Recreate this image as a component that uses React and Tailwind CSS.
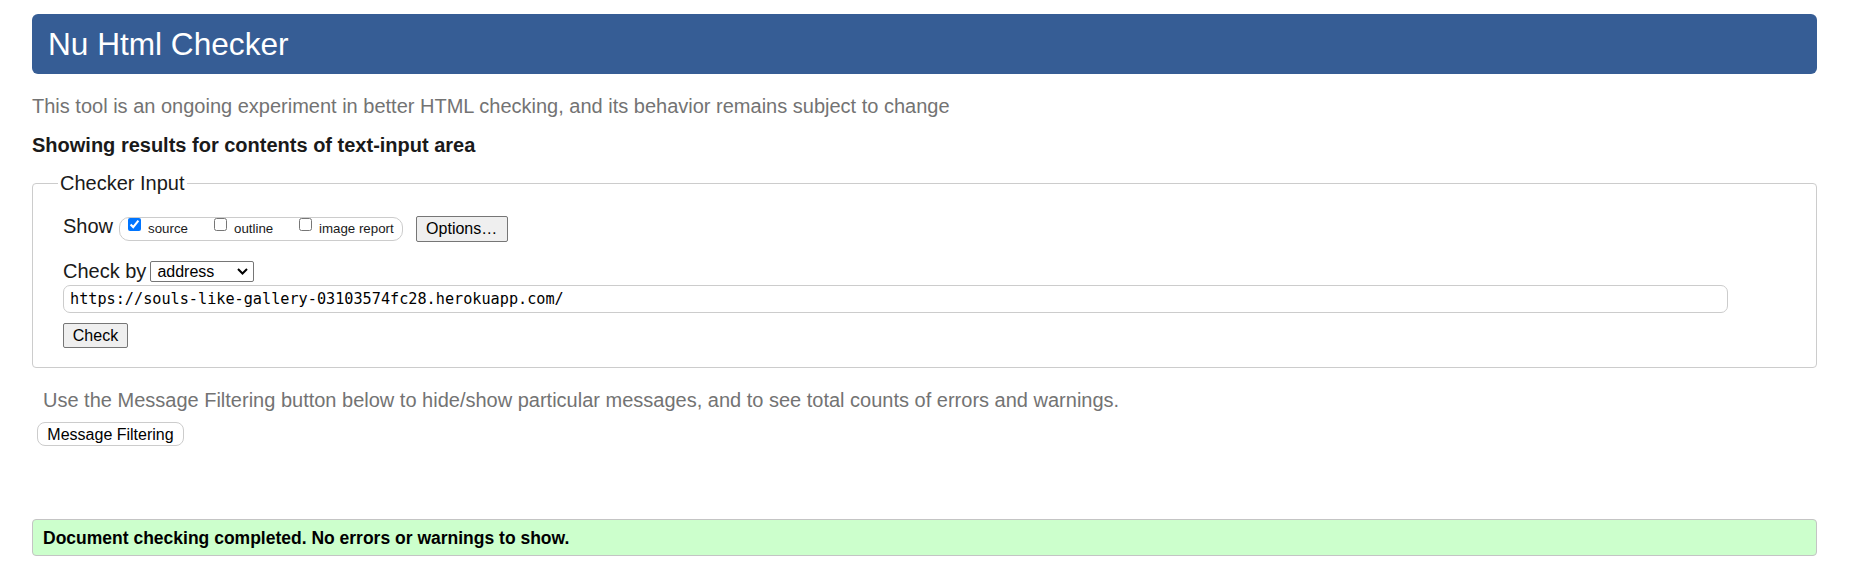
import React from 'react';

export default function App() {
  return (
    <div className="min-h-screen bg-white pl-8 pr-[49px] pt-[14px] pb-2 font-['Liberation_Sans',Arial,sans-serif] text-[#1a1a1a]">
      <div className="h-[60px] rounded-md bg-[#365d95] pl-4">
        <h1 className="text-[31.6px] leading-[60px] text-white">Nu Html Checker</h1>
      </div>

      <p className="mt-[21px] text-[20px] leading-[23px] text-[#737373]">
        This tool is an ongoing experiment in better HTML checking, and its behavior remains subject to change
      </p>

      <p className="mt-[16px] text-[20px] leading-[23px] font-bold">Showing results for contents of text-input area</p>

      <fieldset className="mt-[15px] rounded border border-[#cccccc] pl-[25px] pr-[88px] pb-[19px]">
        <legend className="px-[2px] text-[20px] leading-[23px]">Checker Input</legend>

        <div className="pl-[5px]">
          <div className="mt-[21px] flex h-[26px] items-center">
            <span className="mb-[5px] text-[20px] leading-[23px]">Show</span>
            <div className="ml-[6px] flex h-[24px] items-center rounded-[10px] border border-[#cccccc] pl-[8px] pr-[8px] text-[13.3px] leading-4">
              <label className="flex w-[86px] items-center">
                <input type="checkbox" defaultChecked className="m-0 mb-[9px] h-[13px] w-[13px]" />
                <span className="ml-[7px]">source</span>
              </label>
              <label className="flex w-[85px] items-center">
                <input type="checkbox" className="m-0 mb-[9px] h-[13px] w-[13px]" />
                <span className="ml-[7px]">outline</span>
              </label>
              <label className="flex items-center">
                <input type="checkbox" className="m-0 mb-[9px] h-[13px] w-[13px]" />
                <span className="ml-[7px]">image report</span>
              </label>
            </div>
            <button className="ml-[13px] h-[26px] w-[92px] rounded-[2px] border border-[#767676] bg-[#efefef] text-[16px] text-black">
              Options…
            </button>
          </div>

          <div className="mt-[18px] flex h-[23px] items-center">
            <span className="text-[20px] leading-[23px]">Check by</span>
            <div className="ml-[4px] flex h-[21px] w-[104px] items-center justify-between rounded-[2px] border border-[#767676] bg-white pl-[6px] pr-[5px] text-[16px] text-black">
              <span>address</span>
              <svg width="11" height="7" viewBox="0 0 11 7" fill="none">
                <path d="M1 1l4.5 4.5L10 1" stroke="#000" strokeWidth="2" />
              </svg>
            </div>
          </div>

          <div className="mt-[2px] flex h-[28px] items-center rounded-[7px] border border-[#cccccc] pl-[6px] font-['DejaVu_Sans_Mono',monospace] text-[15.2px] text-black">
            https://souls-like-gallery-03103574fc28.herokuapp.com/
          </div>

          <button className="mt-[10px] h-[25px] w-[65px] rounded-[2px] border border-[#767676] bg-[#efefef] text-[16px] text-black">
            Check
          </button>
        </div>
      </fieldset>

      <p className="mt-[21px] pl-[11px] text-[20px] leading-[23px] text-[#737373]">
        Use the Message Filtering button below to hide/show particular messages, and to see total counts of errors and warnings.
      </p>

      <button className="ml-[5px] mt-[10px] h-[24px] w-[147px] rounded-lg border border-[#cccccc] bg-white text-[16px] text-black">
        Message Filtering
      </button>

      <div className="mt-[72px] flex h-[37px] items-center rounded border border-[#c4c4c4] bg-[#ccffcc] pl-[10px]">
        <p className="text-[17.5px] leading-5 font-bold text-black">Document checking completed. No errors or warnings to show.</p>
      </div>
    </div>
  );
}
